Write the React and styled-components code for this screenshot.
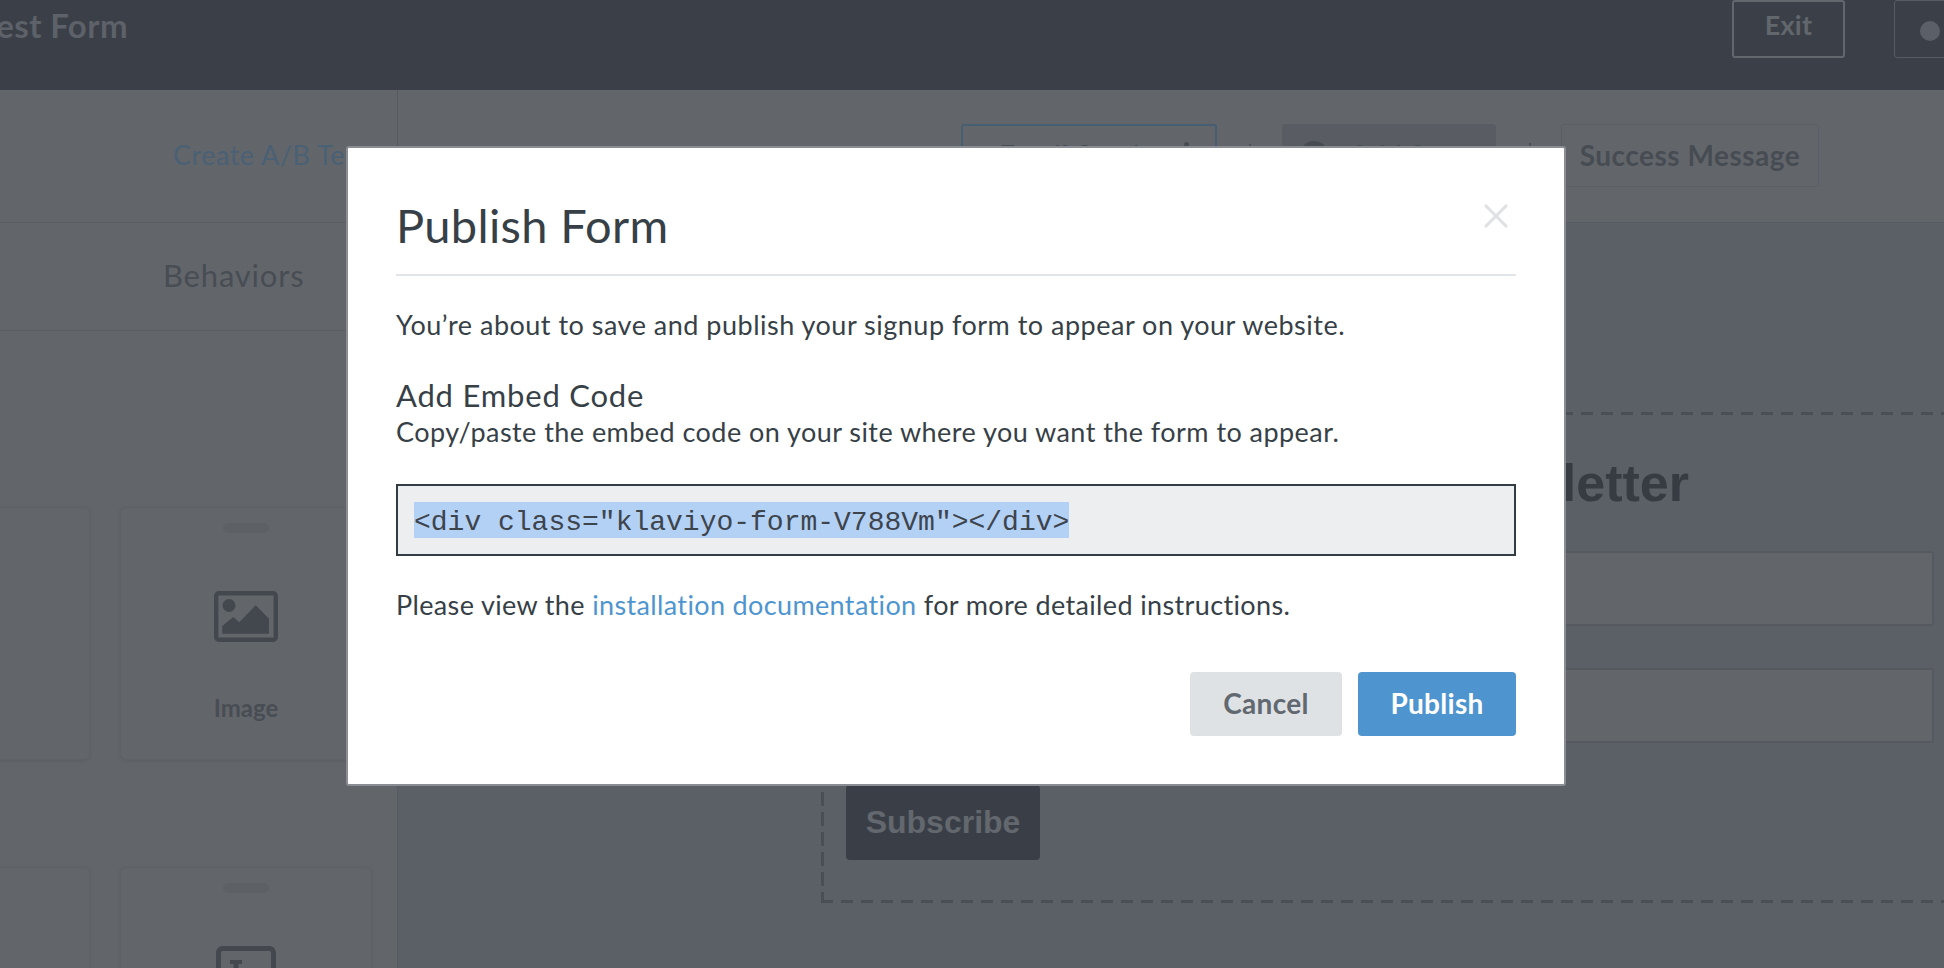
import React from 'react';
import styled, { createGlobalStyle } from 'styled-components';

const GlobalStyle = createGlobalStyle`
  html, body {
    margin: 0;
    padding: 0;
    background: #5b5f66;
  }
  body {
    font-family: 'Lato', 'Liberation Sans', sans-serif;
  }
`;

const Page = styled.div`
  position: relative;
  width: 1944px;
  height: 968px;
  overflow: hidden;
  display: flex;
  flex-direction: column;
  background: #5b5f66;
`;

const TopBar = styled.header`
  height: 90px;
  flex: none;
  display: flex;
  align-items: flex-start;
  justify-content: space-between;
  background: #3b3f47;
  overflow: hidden;
`;

const FormName = styled.div`
  margin-left: -20px;
  margin-top: 5px;
  font-size: 33px;
  line-height: 40px;
  letter-spacing: 0.4px;
  font-weight: 700;
  color: #5d6169;
  white-space: nowrap;
`;

const TopActions = styled.div`
  display: flex;
  gap: 49px;
  margin-right: -60px;
`;

const ExitButton = styled.div`
  width: 113px;
  height: 58px;
  box-sizing: border-box;
  border: 2px solid #62666d;
  border-radius: 3px;
  display: flex;
  align-items: center;
  justify-content: center;
  padding-bottom: 10px;
  font-size: 27px;
  letter-spacing: 0.3px;
  font-weight: 700;
  color: #62666d;
`;

const NextButton = styled.div`
  width: 110px;
  height: 58px;
  box-sizing: border-box;
  border: 1px solid #575b63;
  border-radius: 3px;
  display: flex;
  align-items: center;
  padding: 4px 0 0 25px;
`;

const Dot = styled.span`
  width: 20px;
  height: 20px;
  border-radius: 50%;
  background: #5b5f67;
`;

const Workspace = styled.div`
  flex: 1;
  display: flex;
  min-height: 0;
`;

const Sidebar = styled.aside`
  width: 398px;
  flex: none;
  box-sizing: border-box;
  border-right: 1px solid #565a61;
  background: #62666b;
  overflow: hidden;
`;

const AbRow = styled.div`
  height: 133px;
  box-sizing: border-box;
  border-bottom: 1px solid #5a5e64;
  padding: 47px 0 0 173px;
  font-size: 27px;
  line-height: 36px;
  letter-spacing: 0.5px;
  color: #4a6074;
  white-space: nowrap;
`;

const TabRow = styled.div`
  height: 108px;
  box-sizing: border-box;
  border-bottom: 1px solid #5a5e64;
  padding: 34px 0 0 163px;
  font-size: 31px;
  line-height: 36px;
  letter-spacing: 0.8px;
  color: #484d54;
`;

const CardGrid = styled.div`
  display: grid;
  grid-template-columns: 252px 252px;
  grid-auto-rows: 253px;
  column-gap: 30px;
  row-gap: 107px;
  margin: 176px 0 0 -162px;
`;

const BlockCard = styled.div`
  box-sizing: border-box;
  border: 1px solid #5e6267;
  border-radius: 6px;
  box-shadow: 0 1px 3px rgba(60, 64, 72, 0.2);
  display: flex;
  flex-direction: column;
  align-items: center;
  padding-top: 15px;
`;

const Handle = styled.span`
  width: 46px;
  height: 10px;
  border-radius: 5px;
  background: #5d6166;
`;

const BlockIcon = styled.svg`
  margin-top: ${props => props.$top}px;
  display: block;
  flex: none;
`;

const BlockLabel = styled.div`
  margin-top: 51px;
  font-size: 24px;
  line-height: 30px;
  font-weight: 700;
  color: #484d54;
`;

const Main = styled.main`
  flex: 1;
  min-width: 0;
  overflow: hidden;
`;

const StepRow = styled.div`
  height: 133px;
  box-sizing: border-box;
  border-bottom: 1px solid #565a61;
  background: #62666b;
  padding: 34px 0 0 563px;
  display: flex;
  align-items: flex-start;
`;

const Step = styled.div`
  box-sizing: border-box;
  height: 63px;
  width: ${props => props.$width}px;
  margin-right: 65px;
  padding: 0 0 2px ${props => props.$inset || 0}px;
  position: relative;
  flex: none;
  border-radius: 3px;
  border: ${props => props.$active ? '2px solid #465e72' : props.$filled ? '1px solid #595d63' : '1px solid #5b5f65'};
  background: ${props => props.$filled ? '#595d63' : 'transparent'};
  display: flex;
  align-items: center;
  justify-content: ${props => props.$inset ? 'flex-start' : 'center'};
  font-size: 28px;
  letter-spacing: 0.5px;
  font-weight: 700;
  color: #474c53;
  white-space: nowrap;

  &:not(:last-child)::after {
    content: '';
    position: absolute;
    right: -36px;
    top: 18px;
    width: 2px;
    height: 5px;
    background: #4c5057;
  }
`;

const StepMenuDot = styled.span`
  position: absolute;
  right: 26px;
  top: 16px;
  width: 5px;
  height: 5px;
  border-radius: 50%;
  background: #474c53;
`;

const StepCircle = styled.span`
  width: 28px;
  height: 28px;
  flex: none;
  margin-right: 22px;
  border-radius: 50%;
  background: #474c53;
`;

const Canvas = styled.div`
  margin: 189px 0 0 423px;
  width: 1300px;
  height: 491px;
  box-sizing: border-box;
  padding: 40px 0 0 25px;
  background-image:
    repeating-linear-gradient(90deg, #4a4e55 0 12px, transparent 12px 20px),
    repeating-linear-gradient(90deg, #4a4e55 0 12px, transparent 12px 20px),
    repeating-linear-gradient(180deg, #4a4e55 0 14px, transparent 14px 20px);
  background-size: 100% 3px, 100% 3px, 3px 100%;
  background-position: left top, left bottom, left top;
  background-repeat: no-repeat;
`;

const SignupTitle = styled.div`
  width: 1088px;
  box-sizing: border-box;
  padding-right: 245px;
  text-align: right;
  font-family: 'Liberation Sans', Arial, sans-serif;
  font-size: 52px;
  line-height: 62px;
  font-weight: 700;
  color: #373c43;
  white-space: nowrap;
`;

const SignupInput = styled.div`
  width: 1088px;
  height: 75px;
  box-sizing: border-box;
  margin-top: ${props => props.$first ? 37 : 42}px;
  border: 2px solid #565a60;
  border-radius: 3px;
  background: #62666b;
`;

const SubscribeButton = styled.div`
  width: 194px;
  height: 75px;
  margin-top: 42px;
  border-radius: 4px;
  background: #3a3f47;
  display: flex;
  align-items: center;
  justify-content: center;
  font-family: 'Liberation Sans', Arial, sans-serif;
  font-size: 32px;
  font-weight: 700;
  color: #63676e;
`;

const Modal = styled.section`
  position: absolute;
  left: 346px;
  top: 146px;
  width: 1220px;
  height: 640px;
  box-sizing: border-box;
  border: 2px solid #8a8e94;
  border-radius: 3px;
  background: #fff;
  padding: 0 48px;
  color: #373f47;
  display: flex;
  flex-direction: column;
`;

const ModalHeader = styled.div`
  height: 128px;
  flex: none;
  box-sizing: border-box;
  border-bottom: 2px solid #e1e4e8;
  padding-top: 47px;
  position: relative;
`;

const ModalTitle = styled.h2`
  margin: 0;
  font-size: 47px;
  line-height: 60px;
  letter-spacing: 0.33px;
  font-weight: 400;
`;

const CloseIcon = styled.svg`
  position: absolute;
  right: 8px;
  top: 56px;
`;

const BodyText = styled.p`
  margin: ${props => props.$top || 0}px 0 0;
  font-size: 27px;
  line-height: 36px;
  letter-spacing: ${props => props.$spacing || 0.48}px;
  white-space: nowrap;
`;

const SectionTitle = styled.h3`
  margin: 33px 0 0;
  font-size: 31px;
  line-height: 38px;
  letter-spacing: 0.8px;
  font-weight: 400;
`;

const CodeBox = styled.div`
  margin-top: 34px;
  height: 72px;
  box-sizing: border-box;
  border: 2px solid #333b43;
  background: #eceef0;
  padding: 16px;
  font-family: 'Liberation Mono', 'Courier New', monospace;
  font-size: 28px;
  white-space: nowrap;
`;

const SelectedCode = styled.span`
  display: inline-block;
  height: 36px;
  box-sizing: border-box;
  padding-top: 5px;
  line-height: 31px;
  background: #b3d0f5;
  color: #3d444c;
`;

const DocLink = styled.a`
  color: #4e95d0;
  text-decoration: none;
`;

const ModalFooter = styled.div`
  margin-top: 49px;
  display: flex;
  justify-content: flex-end;
  gap: 16px;
`;

const ModalButton = styled.button`
  width: ${props => props.$primary ? 158 : 152}px;
  height: 64px;
  padding: 0 0 2px;
  border: 0;
  border-radius: 4px;
  background: ${props => props.$primary ? '#4e95d0' : '#dfe2e5'};
  color: ${props => props.$primary ? '#fff' : '#62686f'};
  font-family: inherit;
  font-size: 28px;
  letter-spacing: 0.3px;
  font-weight: 700;
`;

const App = () => {
  return (
    <>
      <GlobalStyle />
      <Page>
        <TopBar>
          <FormName>Test Form</FormName>
          <TopActions>
            <ExitButton>Exit</ExitButton>
            <NextButton><Dot /></NextButton>
          </TopActions>
        </TopBar>
        <Workspace>
          <Sidebar>
            <AbRow>Create A/B Test</AbRow>
            <TabRow>Behaviors</TabRow>
            <CardGrid>
              <BlockCard><Handle /></BlockCard>
              <BlockCard>
                <Handle />
                <BlockIcon $top={58} width="64" height="51" viewBox="0 0 64 51">
                  <rect x="2.2" y="2.2" width="59.6" height="46.6" rx="2.5" fill="none" stroke="#43484f" strokeWidth="4.4" />
                  <circle cx="15" cy="14.5" r="6.5" fill="#43484f" />
                  <path d="M8.3 42.7V35L19.3 26L25.3 31.3L41.7 14.3L55 27.7V42.7Z" fill="#43484f" />
                </BlockIcon>
                <BlockLabel>Image</BlockLabel>
              </BlockCard>
              <BlockCard><Handle /></BlockCard>
              <BlockCard>
                <Handle />
                <BlockIcon $top={53} width="60" height="51" viewBox="0 0 60 51">
                  <rect x="2.5" y="2.5" width="55" height="46" rx="4" fill="none" stroke="#43484f" strokeWidth="5" />
                  <path d="M14 14H26V18H22.5V38H17.5V18H14Z" fill="#43484f" />
                </BlockIcon>
              </BlockCard>
            </CardGrid>
          </Sidebar>
          <Main>
            <StepRow>
              <Step $width={256} $active $inset={36}>
                Email Section
                <StepMenuDot />
              </Step>
              <Step $width={214} $filled $inset={17}>
                <StepCircle />
                Add Step
              </Step>
              <Step $width={258}>Success Message</Step>
            </StepRow>
            <Canvas>
              <SignupTitle>Subscribe to Our Newsletter</SignupTitle>
              <SignupInput $first />
              <SignupInput />
              <SubscribeButton>Subscribe</SubscribeButton>
            </Canvas>
          </Main>
        </Workspace>
        <Modal>
          <ModalHeader>
            <ModalTitle>Publish Form</ModalTitle>
            <CloseIcon width="24" height="24" viewBox="0 0 24 24">
              <path d="M1 1L23 23M23 1L1 23" stroke="#dfe1e3" strokeWidth="3" fill="none" />
            </CloseIcon>
          </ModalHeader>
          <BodyText $top={31} $spacing={0.5}>You’re about to save and publish your signup form to appear on your website.</BodyText>
          <SectionTitle>Add Embed Code</SectionTitle>
          <BodyText $spacing={0.45}>Copy/paste the embed code on your site where you want the form to appear.</BodyText>
          <CodeBox><SelectedCode>{'<div class="klaviyo-form-V788Vm"></div>'}</SelectedCode></CodeBox>
          <BodyText $top={31} $spacing={0.36}>Please view the <DocLink href="#">installation documentation</DocLink> for more detailed instructions.</BodyText>
          <ModalFooter>
            <ModalButton>Cancel</ModalButton>
            <ModalButton $primary>Publish</ModalButton>
          </ModalFooter>
        </Modal>
      </Page>
    </>
  );
};

export default App;
